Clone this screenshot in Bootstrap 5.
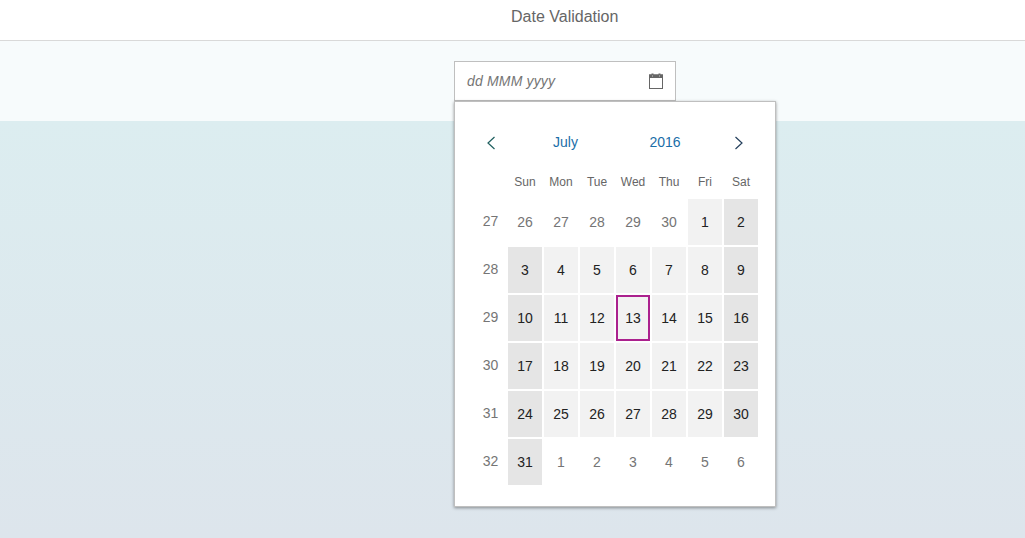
<!DOCTYPE html>
<html lang="en">
<head>
  <meta charset="UTF-8" />
  <meta name="viewport" content="width=device-width, initial-scale=1" />
  <title>Date Validation</title>
  <link href="https://cdn.jsdelivr.net/npm/bootstrap@5.3.0/dist/css/bootstrap.min.css" rel="stylesheet" />
  <script src="https://cdn.jsdelivr.net/npm/bootstrap@5.3.0/dist/js/bootstrap.bundle.min.js"></script>
  <style>
    html, body { height: 100%; }
    body {
      font-family: "Liberation Sans", Arial, sans-serif;
      background: linear-gradient(#dceef1 0, #dcedf0 121px, #dde5ec 100%);
      overflow: hidden;
    }
    .page-head {
      height: 41px;
      background: #fff;
      border-bottom: 1px solid #d9d9d9;
      color: #666;
      font-size: 16px;
      line-height: 18px;
      padding: 8px 0 0 511px;
    }
    .sub-band {
      height: 80px;
      background: #f7fbfc;
      padding: 20px 0 0 454px;
      position: relative;
    }
    .date-field {
      width: 222px;
      height: 40px;
      background: #fff;
      border: 1px solid #bfbfbf;
      padding: 0 11px 0 12px;
      color: #757575;
      font-style: italic;
      font-size: 14px;
      letter-spacing: .17px;
    }
    .cal-pop {
      position: absolute;
      left: 454px;
      top: 60px;
      width: 322px;
      height: 406px;
      background: #fff;
      border: 1px solid #bfbfbf;
      box-shadow: 0 1px 3px rgba(0,0,0,.4);
      font-size: 14px;
      padding: 30px 0 0 18px;
    }
    .cal-nav {
      display: grid;
      grid-template-columns: 36px 113px 86px 61px;
      align-items: center;
      justify-items: center;
      height: 20px;
      color: #1a6ea8;
    }
    .cal-nav svg { display: block; }
    .dow-grid, .cal-grid {
      display: grid;
      grid-template-columns: 33px repeat(7, 34px);
      column-gap: 2px;
    }
    .dow-grid {
      margin-top: 22px;
      height: 16px;
      line-height: 16px;
      color: #666;
      font-size: 12px;
      text-align: center;
    }
    .cal-grid {
      grid-auto-rows: 46px;
      row-gap: 2px;
      margin-top: 9px;
    }
    .cal-grid > div { display: flex; align-items: center; justify-content: center; }
    .wk { color: #757575; padding-left: 2px; padding-bottom: 2px; }
    .day-cell { background: #f2f2f2; color: #222; }
    .day-end { background: #e5e5e5; color: #222; }
    .day-off { color: #757575; }
    .day-now { outline: 2px solid #ab218e; outline-offset: -2px; }
  </style>
</head>
<body>
  <div class="page-head">Date Validation</div>
  <div class="sub-band">
    <div class="date-field d-flex align-items-center justify-content-between">
      <span>dd MMM yyyy</span>
      <svg width="16" height="16" viewBox="0 0 16 16" fill="none">
        <rect x="1.5" y="2" width="13" height="13.5" fill="#fff" stroke="#666"/>
        <rect x="1" y="1.5" width="14" height="3.5" fill="#666"/>
        <rect x="3.5" y="0.5" width="2" height="2.5" fill="#666"/>
        <rect x="10.5" y="0.5" width="2" height="2.5" fill="#666"/>
        <rect x="4" y="2.5" width="1" height="1" fill="#ccc"/>
        <rect x="11" y="2.5" width="1" height="1" fill="#ccc"/>
      </svg>
    </div>
    <div class="cal-pop">
      <div class="cal-nav">
        <svg width="12" height="14" viewBox="0 0 12 14" fill="none"><path d="M9.5 1 3 7l6.5 6" stroke="#1f5f5f" stroke-width="1.2"/></svg>
        <span>July</span>
        <span>2016</span>
        <svg width="12" height="14" viewBox="0 0 12 14" fill="none"><path d="M2.5 1 9 7l-6.5 6" stroke="#243f5c" stroke-width="1.2"/></svg>
      </div>
      <div class="dow-grid">
        <span></span><span>Sun</span><span>Mon</span><span>Tue</span><span>Wed</span><span>Thu</span><span>Fri</span><span>Sat</span>
      </div>
      <div class="cal-grid" id="grid"></div>
    </div>
  </div>
  <script>
    const weeks = [
      [27, [26,27,28,29,30,1,2]],
      [28, [3,4,5,6,7,8,9]],
      [29, [10,11,12,13,14,15,16]],
      [30, [17,18,19,20,21,22,23]],
      [31, [24,25,26,27,28,29,30]],
      [32, [31,1,2,3,4,5,6]]
    ];
    let html = '';
    weeks.forEach((w, r) => {
      html += `<div class="wk">${w[0]}</div>`;
      w[1].forEach((n, i) => {
        let cls = i === 0 || i === 6 ? 'day-end' : 'day-cell';
        if ((r === 0 && n > 20) || (r === 5 && i > 0)) cls = 'day-off';
        if (r === 2 && n === 13) cls += ' day-now';
        html += `<div class="${cls}">${n}</div>`;
      });
    });
    document.getElementById('grid').innerHTML = html;
  </script>
</body>
</html>
